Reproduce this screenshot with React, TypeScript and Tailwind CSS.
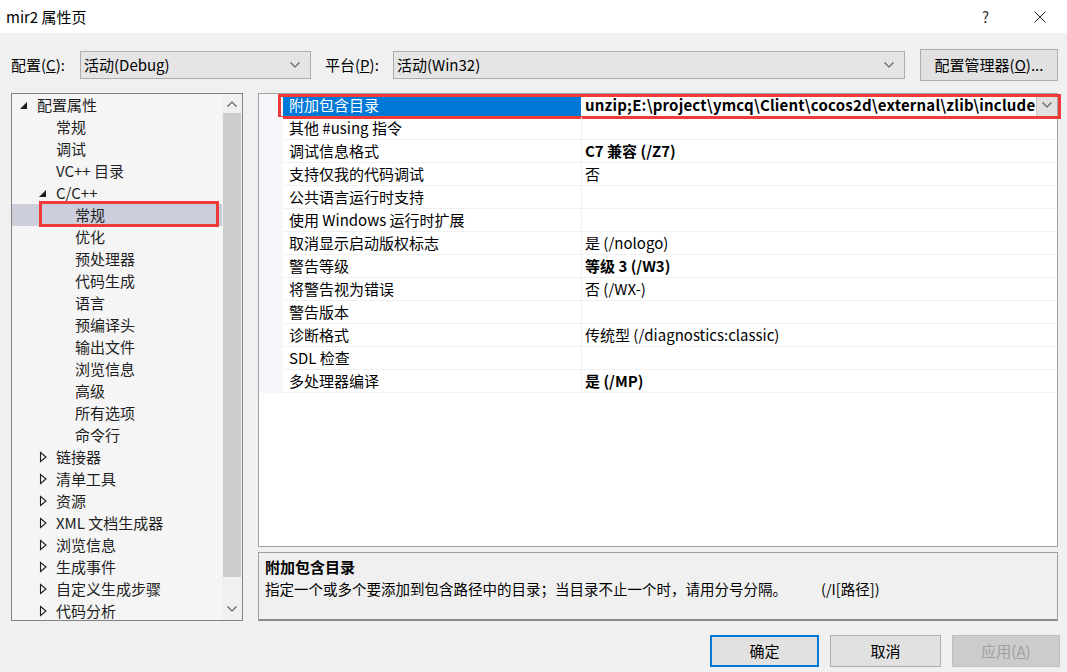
import React from "react";

type TreeItem = {
  label: string;
  level: number;
  arrow?: "open" | "closed";
  selected?: boolean;
};

const treeItems: TreeItem[] = [
  { label: "配置属性", level: 0, arrow: "open" },
  { label: "常规", level: 1 },
  { label: "调试", level: 1 },
  { label: "VC++ 目录", level: 1 },
  { label: "C/C++", level: 1, arrow: "open" },
  { label: "常规", level: 2, selected: true },
  { label: "优化", level: 2 },
  { label: "预处理器", level: 2 },
  { label: "代码生成", level: 2 },
  { label: "语言", level: 2 },
  { label: "预编译头", level: 2 },
  { label: "输出文件", level: 2 },
  { label: "浏览信息", level: 2 },
  { label: "高级", level: 2 },
  { label: "所有选项", level: 2 },
  { label: "命令行", level: 2 },
  { label: "链接器", level: 1, arrow: "closed" },
  { label: "清单工具", level: 1, arrow: "closed" },
  { label: "资源", level: 1, arrow: "closed" },
  { label: "XML 文档生成器", level: 1, arrow: "closed" },
  { label: "浏览信息", level: 1, arrow: "closed" },
  { label: "生成事件", level: 1, arrow: "closed" },
  { label: "自定义生成步骤", level: 1, arrow: "closed" },
  { label: "代码分析", level: 1, arrow: "closed" },
];

type Prop = { name: string; value: string; bold?: boolean };

const props: Prop[] = [
  { name: "附加包含目录", value: "unzip;E:\\project\\ymcq\\Client\\cocos2d\\external\\zlib\\include", bold: true },
  { name: "其他 #using 指令", value: "" },
  { name: "调试信息格式", value: "C7 兼容 (/Z7)", bold: true },
  { name: "支持仅我的代码调试", value: "否" },
  { name: "公共语言运行时支持", value: "" },
  { name: "使用 Windows 运行时扩展", value: "" },
  { name: "取消显示启动版权标志", value: "是 (/nologo)" },
  { name: "警告等级", value: "等级 3 (/W3)", bold: true },
  { name: "将警告视为错误", value: "否 (/WX-)" },
  { name: "警告版本", value: "" },
  { name: "诊断格式", value: "传统型 (/diagnostics:classic)" },
  { name: "SDL 检查", value: "" },
  { name: "多处理器编译", value: "是 (/MP)", bold: true },
];

const indent = ["pl-[6px]", "pl-[25px]", "pl-[44px]"];

function Chevron({ up = false, color = "#606060" }: { up?: boolean; color?: string }) {
  return (
    <svg width="10" height="6" viewBox="0 0 10 6" className={up ? "rotate-180" : ""}>
      <path d="M0.5 0.5 L5 5 L9.5 0.5" fill="none" stroke={color} strokeWidth="1.2" />
    </svg>
  );
}

function Arrow({ kind }: { kind?: "open" | "closed" }) {
  if (kind === "open") {
    return (
      <svg width="12" height="12" viewBox="0 0 12 12">
        <path d="M9 3 L9 10 L2 10 Z" fill="#1e1e1e" />
      </svg>
    );
  }
  if (kind === "closed") {
    return (
      <svg width="12" height="12" viewBox="0 0 12 12">
        <path d="M3.5 1.5 L9 6 L3.5 10.5 Z" fill="none" stroke="#1e1e1e" strokeWidth="1.1" />
      </svg>
    );
  }
  return <span className="w-[12px]" />;
}

function Combo({ text, width }: { text: string; width: string }) {
  return (
    <div
      className={`${width} h-[28px] flex items-center justify-between border border-[#adadad] bg-[#e5e5e5] pl-[3px] pr-[10px]`}
    >
      <span>{text}</span>
      <Chevron />
    </div>
  );
}

export default function App() {
  return (
    <div className="w-[1067px] h-[672px] bg-[#f0f0f0] overflow-hidden text-[15px] leading-[20px] text-black font-['Microsoft_YaHei','Noto_Sans_CJK_SC',sans-serif]">
      {/* title bar */}
      <div className="h-[33px] bg-white flex items-center justify-between pl-[6px] pr-[21px]">
        <span className="text-[15px]">mir2 属性页</span>
        <div className="flex items-center gap-[45px]">
          <span className="text-[15px] text-[#333]">?</span>
          <svg width="12" height="12" viewBox="0 0 12 12">
            <path d="M0.5 0.5 L11.5 11.5 M11.5 0.5 L0.5 11.5" stroke="#222" strokeWidth="1" />
          </svg>
        </div>
      </div>

      {/* config row */}
      <div className="mt-[16px] h-[32px] flex items-center pl-[11px]">
        <span className="w-[69px]">
          配置(<span className="underline">C</span>):
        </span>
        <Combo text="活动(Debug)" width="w-[231px]" />
        <span className="ml-[14px] w-[68px]">
          平台(<span className="underline">P</span>):
        </span>
        <Combo text="活动(Win32)" width="w-[512px]" />
        <div className="ml-[15px] w-[138px] h-[32px] border border-[#adadad] bg-[#e1e1e1] flex items-center justify-center">
          配置管理器(<span className="underline">O</span>)...
        </div>
      </div>

      {/* main */}
      <div className="mt-[12px] flex pl-[11px] gap-[15px]">
        {/* tree */}
        <div className="w-[232px] h-[528px] border border-[#828282] bg-[#f5f5f5] flex text-[#1e1e1e]">
          <div className="flex-1 flex flex-col overflow-hidden">
            {treeItems.map((t, i) => (
              <div
                key={i}
                className={`relative h-[22px] shrink-0 flex items-center ${indent[t.level]} ${
                  t.selected ? "bg-[#cccedb]" : ""
                }`}
              >
                {t.arrow ? (
                  <Arrow kind={t.arrow} />
                ) : (
                  <span className="w-[12px]" />
                )}
                <span className="ml-[7px] whitespace-nowrap">{t.label}</span>
                {t.selected && (
                  <div className="absolute left-[27px] right-[3px] top-[-3px] bottom-[-1px] border-[3px] border-[#f03a3a]" />
                )}
              </div>
            ))}
          </div>
          <div className="w-[20px] flex flex-col bg-[#f0f0f0]">
            <div className="h-[19px] flex items-center justify-center">
              <Chevron up />
            </div>
            <div className="mx-[1px] h-[464px] bg-[#cdcdcd]" />
            <div className="flex-1 flex items-end justify-center pb-[8px]">
              <Chevron />
            </div>
          </div>
        </div>

        {/* right column */}
        <div className="w-[800px] flex flex-col gap-[5px]">
          <div className="h-[454px] border border-[#a0a0a0] bg-white">
            <div className="flex flex-col">
              {props.map((p, i) => {
                const sel = i === 0;
                return (
                  <div key={i} className="relative flex h-[23px]">
                    <div className="w-[24px] bg-[#f5f7fa]" />
                    <div
                      className={`w-[299px] flex items-center pl-[6px] border-b border-r ${
                        sel
                          ? "bg-[#0078d7] text-white border-white"
                          : "border-[#f0f0f0]"
                      }`}
                    >
                      {p.name}
                    </div>
                    <div
                      className={`flex-1 flex items-center border-b border-[#f0f0f0] pl-[3px] whitespace-nowrap overflow-hidden ${
                        p.bold ? "font-bold" : ""
                      } ${sel ? "tracking-[0.2px]" : ""}`}
                    >
                      <span className="flex-1">{p.value}</span>
                      {sel && (
                        <div className="w-[21px] h-[22px] bg-[#e1e1e1] border-l border-[#c8c8c8] flex items-center justify-center">
                          <Chevron />
                        </div>
                      )}
                    </div>
                    {sel && (
                      <div className="absolute left-[19px] right-[-4px] top-[0px] bottom-[-2px] border-[3px] border-[#f03a3a]" />
                    )}
                  </div>
                );
              })}
            </div>
          </div>
          <div className="h-[69px] border border-[#a0a0a0] border-b-[2px] border-b-[#8a8a8a] bg-[#f0f0f0] px-[6px] pt-[3px]">
            <div className="font-bold leading-[22px]">附加包含目录</div>
            <div className="text-[14.5px] leading-[22px] whitespace-nowrap">
              指定一个或多个要添加到包含路径中的目录；当目录不止一个时，请用分号分隔。
              <span className="ml-[34px]">(/I[路径])</span>
            </div>
          </div>
        </div>
      </div>

      {/* buttons */}
      <div className="mt-[14px] flex justify-end pr-[7px] gap-[11px]">
        <div className="w-[109px] h-[32px] border-2 border-[#0078d7] bg-[#e1e1e1] flex items-center justify-center">
          确定
        </div>
        <div className="w-[111px] h-[32px] border border-[#adadad] bg-[#e1e1e1] flex items-center justify-center">
          取消
        </div>
        <div className="w-[108px] h-[32px] border border-[#bfbfbf] bg-[#cccccc] text-[#a0a0a0] flex items-center justify-center">
          应用(<span className="underline">A</span>)
        </div>
      </div>
    </div>
  );
}
